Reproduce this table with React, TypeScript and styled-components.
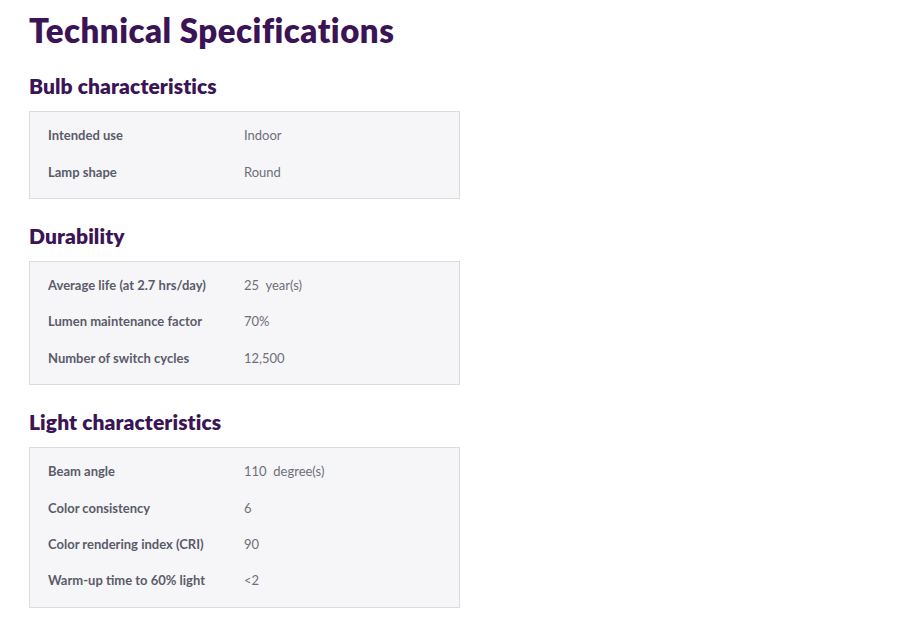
import React from "react";
import styled, { createGlobalStyle } from "styled-components";

const Global = createGlobalStyle`
  body { margin: 0; background: #ffffff; font-family: Lato, "Open Sans", sans-serif; }
`;

const Page = styled.div`
  padding: 8px 0 0 29px;
  width: 431px;
`;

const Title = styled.h1`
  margin: 0 0 21px;
  font-size: 33px;
  line-height: 44px;
  font-weight: 800;
  color: #3b1456;
  letter-spacing: 0.5px;
`;

const Section = styled.section`
  margin-bottom: 24px;
`;

const SectionTitle = styled.h2`
  margin: 0 0 12px;
  font-size: 21px;
  line-height: 26px;
  font-weight: 800;
  color: #3b1456;
  letter-spacing: 0.1px;
`;

const Box = styled.div`
  background: #f6f6f8;
  border: 1px solid #dcdcdf;
  padding: 5px 19px 8px 18px;
`;

const Row = styled.div`
  display: grid;
  grid-template-columns: 196px 1fr;
  height: 36.4px;
  align-items: center;
  font-size: 13px;
`;

const Label = styled.span`
  color: #5b5b6a;
  font-weight: 700;
`;

const Value = styled.span`
  color: #6e6e78;
  font-weight: 400;
  white-space: pre;
`;

const data: { title: string; rows: [string, string][] }[] = [
  {
    title: "Bulb characteristics",
    rows: [
      ["Intended use", "Indoor"],
      ["Lamp shape", "Round"],
    ],
  },
  {
    title: "Durability",
    rows: [
      ["Average life (at 2.7 hrs/day)", "25  year(s)"],
      ["Lumen maintenance factor", "70%"],
      ["Number of switch cycles", "12,500"],
    ],
  },
  {
    title: "Light characteristics",
    rows: [
      ["Beam angle", "110  degree(s)"],
      ["Color consistency", "6"],
      ["Color rendering index (CRI)", "90"],
      ["Warm-up time to 60% light", "<2"],
    ],
  },
];

export default function App() {
  return (
    <>
      <Global />
      <Page>
        <Title>Technical Specifications</Title>
        {data.map((s) => (
          <Section key={s.title}>
            <SectionTitle>{s.title}</SectionTitle>
            <Box>
              {s.rows.map(([l, v]) => (
                <Row key={l}>
                  <Label>{l}</Label>
                  <Value>{v}</Value>
                </Row>
              ))}
            </Box>
          </Section>
        ))}
      </Page>
    </>
  );
}
